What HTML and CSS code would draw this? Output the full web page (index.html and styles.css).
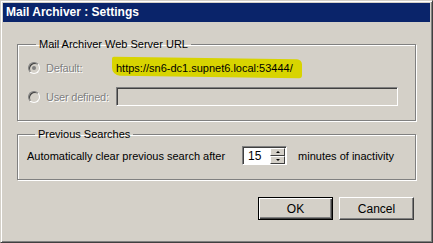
FILE: index.html
```html
<!DOCTYPE html>
<html lang="en">
<head>
    <meta charset="UTF-8">
    <title>Mail Archiver : Settings</title>
    <link rel="stylesheet" href="styles.css">
</head>
<body>

<div class="window">
    <div class="titlebar">Mail Archiver : Settings</div>
    <div class="dialog-body">
        <fieldset class="group url-group">
            <legend>Mail Archiver Web Server URL</legend>
            <div class="row">
                <span class="radio checked"></span>
                <span class="disabled-label">Default:</span>
                <span class="url-value"><span class="marker"></span>https://sn6-dc1.supnet6.local:53444/</span>
            </div>
            <div class="row">
                <span class="radio"></span>
                <span class="disabled-label">User defined:</span>
                <span class="text-input"></span>
            </div>
        </fieldset>

        <fieldset class="group search-group">
            <legend>Previous Searches</legend>
            <div class="row">
                <span>Automatically clear previous search after</span>
                <span class="spinner">
                    <span class="spinner-value">15</span>
                    <span class="spinner-buttons">
                        <span class="spin-btn"><span class="arrow-up"></span></span>
                        <span class="spin-btn"><span class="arrow-down"></span></span>
                    </span>
                </span>
                <span>minutes of inactivity</span>
            </div>
        </fieldset>

        <div class="buttons">
            <button class="btn btn-default">OK</button>
            <button class="btn">Cancel</button>
        </div>
    </div>
</div>

</body>
</html>
```

FILE: styles.css
```css
body {
    margin: 0;
    padding: 0;
    background-color: #fff;
    font-family: 'Liberation Sans', Arial, sans-serif;
    font-size: 11px;
    color: #000;
}

.window {
    width: 433px;
    height: 243px;
    box-sizing: border-box;
    background-color: #d4d0c8;
    border: 1px solid;
    border-color: #d4d0c8 #404040 #404040 #d4d0c8;
    box-shadow: inset 1px 1px 0 #fff, inset -1px -1px 0 #808080;
    padding: 2px 2px 3px 2px;
    display: flex;
    flex-direction: column;
}

.titlebar {
    height: 19px;
    background-color: #0a246a;
    color: #fff;
    font-weight: bold;
    font-size: 12px;
    line-height: 19px;
    padding-left: 3px;
}

.dialog-body {
    flex: 1;
    padding: 16px 14px 0 14px;
}

.group {
    margin: 0;
    padding: 0;
    border: 1px solid #808080;
    box-shadow: inset 1px 1px 0 #fff, 1px 1px 0 #fff;
}

.group legend {
    margin-left: 8px;
    padding: 0 3px;
    line-height: 13px;
}

.url-group {
    padding: 7px 10px 14px 10px;
}

.search-group {
    margin-top: 7px;
    padding: 5px 9px 14px 9px;
}

.row {
    display: flex;
    align-items: center;
    height: 19px;
}

.url-group .row + .row {
    margin-top: 10px;
}

.radio {
    width: 10px;
    height: 10px;
    border-radius: 50%;
    border: 1px solid;
    border-color: #808080 #fff #fff #808080;
    box-shadow: inset 1px 1px 0 #404040;
    background-color: #d4d0c8;
    margin-right: 6px;
    position: relative;
}

.radio.checked::after {
    content: '';
    position: absolute;
    left: 3px;
    top: 3px;
    width: 4px;
    height: 4px;
    border-radius: 50%;
    background-color: #808080;
}

.disabled-label {
    width: 69px;
    color: #808080;
    text-shadow: 1px 1px 0 #fff;
    letter-spacing: -0.2px;
}

.url-value {
    position: relative;
    padding-left: 1px;
    z-index: 0;
}

/* yellow highlighter stroke over the url */
.url-value .marker {
    position: absolute;
    left: -3px;
    top: -4px;
    width: 190px;
    height: 19px;
    background-color: #d8d400;
    border-radius: 2px 5px 3px 8px;
    transform: skewY(0.8deg);
    z-index: -1;
}

.text-input {
    width: 278px;
    height: 15px;
    margin-left: 1px;
    border: 1px solid;
    border-color: #808080 #fff #fff #808080;
    box-shadow: inset 1px 1px 0 #404040, inset -1px -1px 0 #d4d0c8;
    padding: 1px;
    background-color: #d4d0c8;
}

.spinner {
    display: flex;
    align-items: center;
    width: 43px;
    height: 17px;
    margin: 0 11px 0 17px;
    background-color: #fff;
    border: 1px solid;
    border-color: #808080 #fff #fff #808080;
    box-shadow: inset 1px 1px 0 #404040;
}

.spinner-value {
    flex: 1;
    padding-left: 5px;
    font-size: 12px;
}

.spinner-buttons {
    display: flex;
    flex-direction: column;
    width: 15px;
    height: 16px;
    margin-right: 1px;
    margin-top: 1px;
}

.spin-btn {
    flex: 1;
    background-color: #d4d0c8;
    border-top: 1px solid #fff;
    border-left: 1px solid #fff;
    border-right: 1px solid #404040;
    border-bottom: 1px solid #404040;
    display: flex;
    align-items: center;
    justify-content: center;
    box-sizing: border-box;
}

.arrow-up {
    width: 0;
    height: 0;
    border-left: 2px solid transparent;
    border-right: 2px solid transparent;
    border-bottom: 2px solid #000;
}

.arrow-down {
    width: 0;
    height: 0;
    border-left: 2px solid transparent;
    border-right: 2px solid transparent;
    border-top: 2px solid #000;
}

.buttons {
    display: flex;
    justify-content: flex-end;
    gap: 6px;
    margin-top: 17px;
    padding-right: 2px;
}

.btn {
    width: 75px;
    height: 23px;
    font-family: 'Liberation Sans', Arial, sans-serif;
    font-size: 12px;
    color: #000;
    background-color: #d4d0c8;
    border: 1px solid;
    border-color: #fff #404040 #404040 #fff;
    box-shadow: inset -1px -1px 0 #808080;
    padding: 0;
}

.btn-default {
    border: 1px solid #000;
    box-shadow: inset 1px 1px 0 #fff, inset -1px -1px 0 #404040, inset -2px -2px 0 #808080;
}
```
